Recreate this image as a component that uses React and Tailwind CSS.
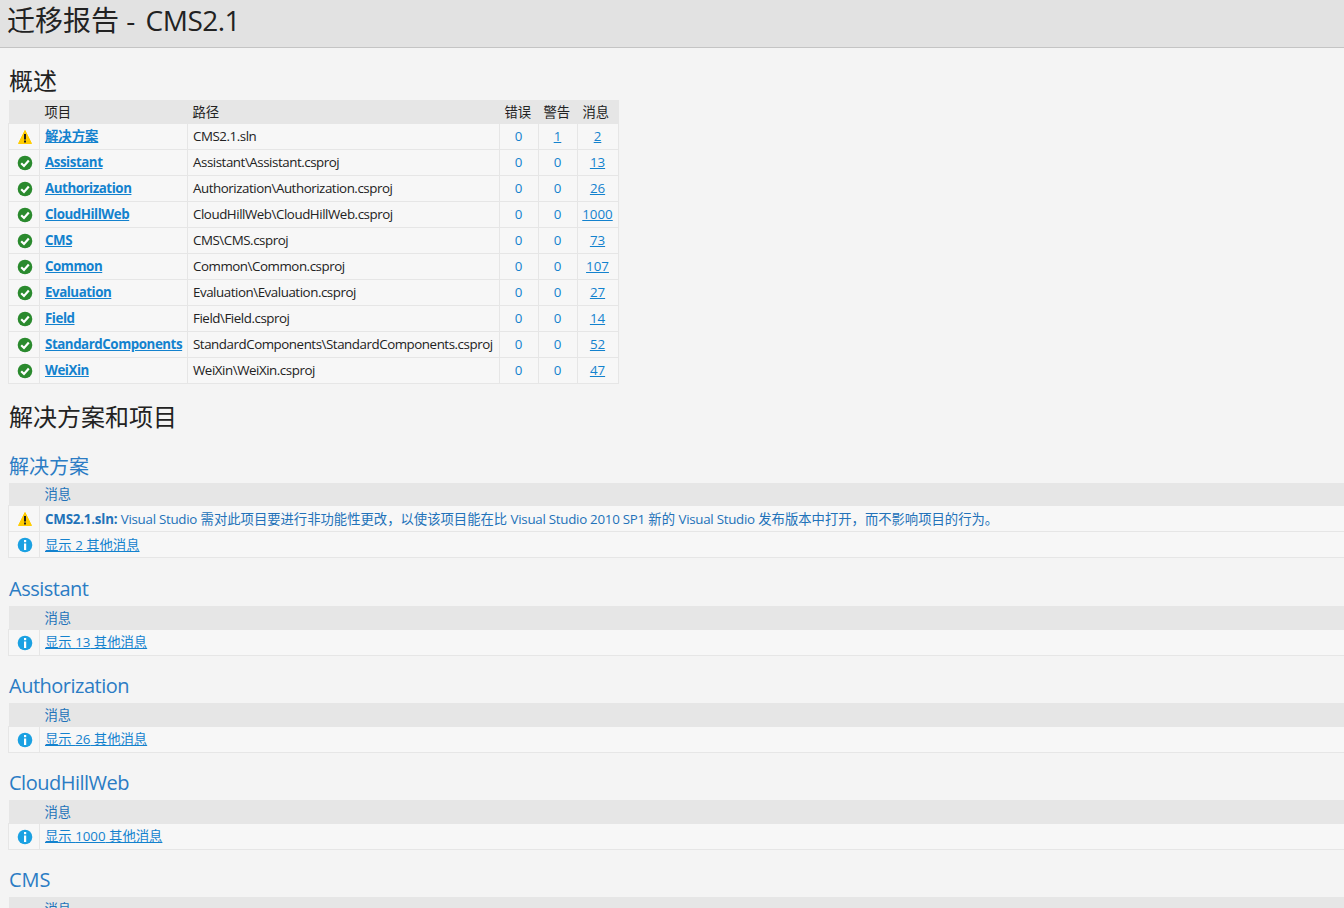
import React from 'react';

const FONT = "font-['Open_Sans','Noto_Sans_CJK_SC',sans-serif]";

const overview = [
    { name: '解决方案', path: 'CMS2.1.sln', warn: 1, msg: 2, warning: true },
    { name: 'Assistant', path: 'Assistant\\Assistant.csproj', warn: 0, msg: 13 },
    { name: 'Authorization', path: 'Authorization\\Authorization.csproj', warn: 0, msg: 26 },
    { name: 'CloudHillWeb', path: 'CloudHillWeb\\CloudHillWeb.csproj', warn: 0, msg: 1000 },
    { name: 'CMS', path: 'CMS\\CMS.csproj', warn: 0, msg: 73 },
    { name: 'Common', path: 'Common\\Common.csproj', warn: 0, msg: 107 },
    { name: 'Evaluation', path: 'Evaluation\\Evaluation.csproj', warn: 0, msg: 27 },
    { name: 'Field', path: 'Field\\Field.csproj', warn: 0, msg: 14 },
    { name: 'StandardComponents', path: 'StandardComponents\\StandardComponents.csproj', warn: 0, msg: 52 },
    { name: 'WeiXin', path: 'WeiXin\\WeiXin.csproj', warn: 0, msg: 47 },
];

const projects = [
    { name: 'Assistant', count: 13 },
    { name: 'Authorization', count: 26 },
    { name: 'CloudHillWeb', count: 1000 },
];

function WarningIcon() {
    return (
        <svg width="16" height="16" viewBox="0 0 16 16" className="block">
            <path d="M8 1.5 L14.5 14.5 L1.5 14.5 Z" fill="#ffcc00" stroke="#ffcc00" strokeLinejoin="round" />
            <rect x="7" y="5" width="2" height="5.5" fill="#1e1e1e" />
            <rect x="7" y="11.5" width="2" height="2" fill="#1e1e1e" />
        </svg>
    );
}

function OkIcon() {
    return (
        <svg width="16" height="16" viewBox="0 0 16 16" className="block">
            <circle cx="8" cy="8" r="7.3" fill="#2a8a2e" />
            <path d="M4.2 8.2 L7 11 L11.8 5.6" fill="none" stroke="#fff" strokeWidth="2.2" />
        </svg>
    );
}

function InfoIcon() {
    return (
        <svg width="16" height="16" viewBox="0 0 16 16" className="block">
            <circle cx="8" cy="8" r="7.3" fill="#1ba1e2" />
            <rect x="7" y="3" width="2.2" height="2.2" fill="#fff" />
            <rect x="7" y="6.5" width="2.2" height="6.5" fill="#fff" />
        </svg>
    );
}

function IconCell({ children }) {
    return (
        <td className="border border-[#e6e6e6] bg-[#f7f7f7] p-0">
            <div className="flex justify-center pt-px pl-px">{children}</div>
        </td>
    );
}

function Latin({ children }) {
    return <span className="tracking-[-0.27px]">{children}</span>;
}

function MessagesTable({ children }) {
    return (
        <table className="-ml-px w-[1400px] table-fixed border-collapse text-[13.33px] leading-[18px] text-[#2272b9]">
            <thead>
                <tr className="h-[23px] bg-[#e6e6e6]">
                    <th className="w-[31px] p-0" />
                    <th className="px-[5px] pt-px pb-0 text-left font-normal">消息</th>
                </tr>
            </thead>
            <tbody>{children}</tbody>
        </table>
    );
}

function ShowMore({ count }) {
    return (
        <tr className="h-[26px]">
            <IconCell><InfoIcon /></IconCell>
            <td className="border border-[#e6e6e6] bg-[#f7f7f7] px-[5px] py-0">
                <a className="text-[#1382ce] underline">显示 {count} 其他消息</a>
            </td>
        </tr>
    );
}

export default function App() {
    return (
        <div className={`h-screen overflow-hidden bg-[#f4f4f4] text-[#222222] ${FONT}`}>
            <header className="h-12 border-b border-[#c4c4c4] bg-[#e2e2e2] pl-[7px]">
                <h1 className="text-[28px] leading-[41px]">迁移报告 - <span className="ml-[3px] tracking-[-0.5px]">CMS2.1</span></h1>
            </header>

            <main className="pl-[9px]">
                <h2 className="mt-[15px] mb-px text-[24px] leading-[36px]">概述</h2>
                <table className="-ml-px w-[610px] table-fixed border-collapse text-[13.33px] leading-[18px]">
                    <thead>
                        <tr className="h-[23px] bg-[#e6e6e6]">
                            <th className="w-[31px] p-0" />
                            <th className="w-[148px] px-[5px] pt-px pb-0 text-left font-normal">项目</th>
                            <th className="w-[312px] px-[5px] pt-px pb-0 text-left font-normal">路径</th>
                            <th className="w-[39px] px-[5px] pt-px pb-0 text-left font-normal whitespace-nowrap">错误</th>
                            <th className="w-[39px] px-[5px] pt-px pb-0 text-left font-normal whitespace-nowrap">警告</th>
                            <th className="w-[41px] px-[5px] pt-px pb-0 text-left font-normal whitespace-nowrap">消息</th>
                        </tr>
                    </thead>
                    <tbody>
                        {overview.map(row => (
                            <tr key={row.name} className="h-[26px]">
                                <IconCell>{row.warning ? <WarningIcon /> : <OkIcon />}</IconCell>
                                <td className="border border-[#e6e6e6] bg-[#f7f7f7] px-[5px] py-0">
                                    <a className={`font-bold text-[#1382ce] underline ${row.warning ? '' : 'tracking-[-0.45px]'}`}>{row.name}</a>
                                </td>
                                <td className="border border-[#e6e6e6] bg-[#f7f7f7] px-[5px] py-0 tracking-[-0.45px] whitespace-nowrap">{row.path}</td>
                                <td className="border border-[#e6e6e6] bg-[#f7f7f7] p-0 pr-px text-center text-[#1382ce]">0</td>
                                <td className="border border-[#e6e6e6] bg-[#f7f7f7] p-0 pr-px text-center text-[#1382ce]">
                                    {row.warn ? <a className="underline">{row.warn}</a> : 0}
                                </td>
                                <td className="border border-[#e6e6e6] bg-[#f7f7f7] p-0 pr-px text-center text-[#1382ce]">
                                    <a className="underline">{row.msg}</a>
                                </td>
                            </tr>
                        ))}
                    </tbody>
                </table>

                <h2 className="mt-[15px] text-[24px] leading-[36px]">解决方案和项目</h2>

                <h3 className="mt-[17px] mb-px text-[20px] leading-[30px] text-[#2b7cc4]">解决方案</h3>
                <MessagesTable>
                    <tr className="h-[26px]">
                        <IconCell><WarningIcon /></IconCell>
                        <td className="border border-[#e6e6e6] bg-[#f7f7f7] px-[5px] py-0 whitespace-nowrap">
                            <strong className="tracking-[-0.2px]">CMS2.1.sln:</strong> <Latin>Visual Studio</Latin> 需对此项目要进行非功能性更改，以使该项目能在比 <Latin>Visual Studio 2010 SP1</Latin> 新的 <Latin>Visual Studio</Latin> 发布版本中打开，而不影响项目的行为。
                        </td>
                    </tr>
                    <ShowMore count={2} />
                </MessagesTable>

                {projects.map((p, i) => (
                    <section key={p.name}>
                        <h3 className={`${i === 0 ? 'mt-4' : 'mt-[15.5px]'} mb-0.5 text-[20px] leading-[30px] tracking-[-0.5px] text-[#2b7cc4]`}>{p.name}</h3>
                        <MessagesTable>
                            <ShowMore count={p.count} />
                        </MessagesTable>
                    </section>
                ))}

                <h3 className="mt-[15.5px] mb-0.5 text-[20px] leading-[30px] text-[#2b7cc4]">CMS</h3>
                <MessagesTable>
                    <ShowMore count={73} />
                </MessagesTable>
            </main>
        </div>
    );
}
